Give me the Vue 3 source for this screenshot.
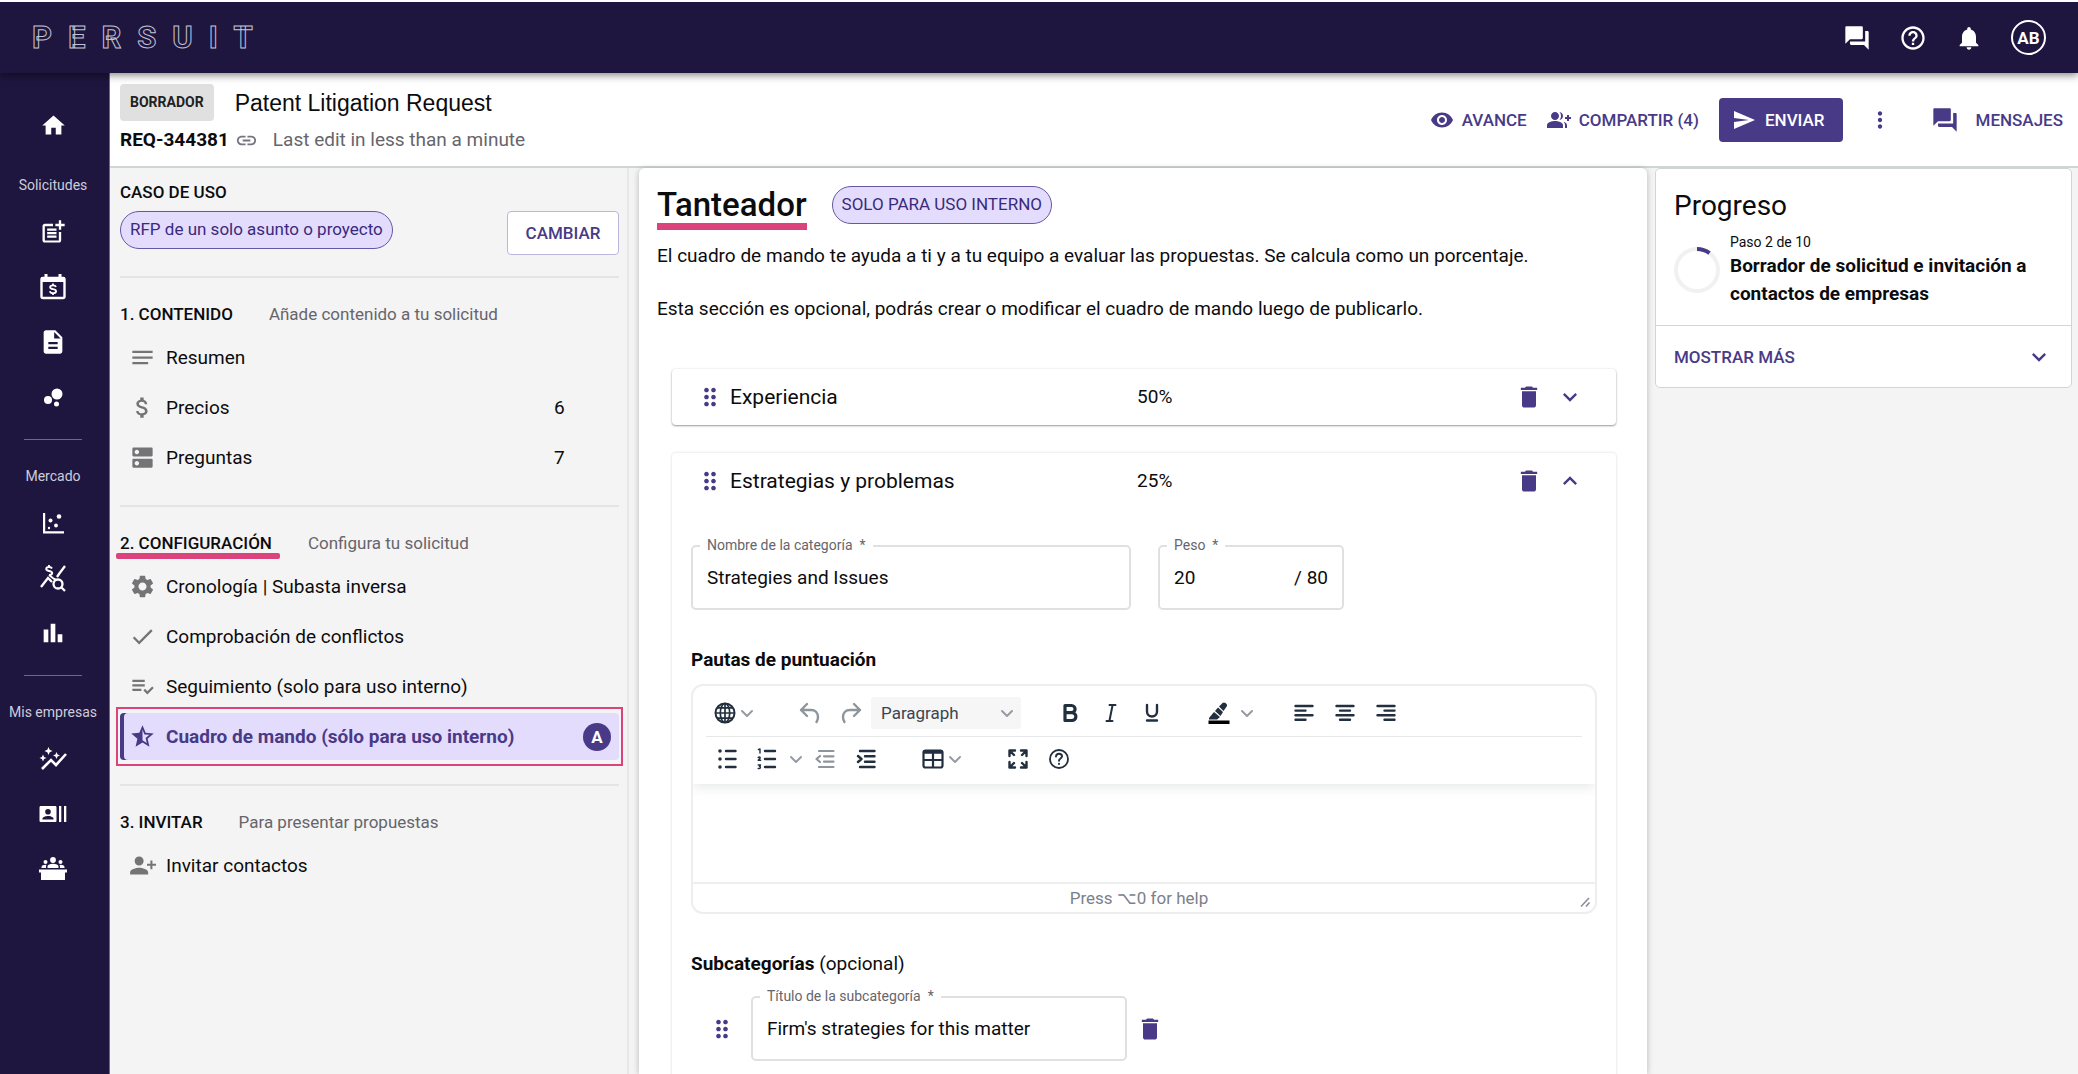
<script setup>
import { h, ref } from 'vue'

const paths = {
  home: 'M10 20v-6h4v6h5v-8h3L12 3 2 12h3v8z',
  forum: 'M21 6h-2v9H6v2c0 .55.45 1 1 1h11l4 4V7c0-.55-.45-1-1-1zm-4 6V3c0-.55-.45-1-1-1H3c-.55 0-1 .45-1 1v14l4-4h10c.55 0 1-.45 1-1z',
  help: 'M11 18h2v-2h-2v2zm1-16C6.48 2 2 6.48 2 12s4.48 10 10 10 10-4.48 10-10S17.52 2 12 2zm0 18c-4.41 0-8-3.59-8-8s3.59-8 8-8 8 3.59 8 8-3.59 8-8 8zm0-14c-2.21 0-4 1.79-4 4h2c0-1.1.9-2 2-2s2 .9 2 2c0 2-3 1.75-3 5h2c0-2.25 3-2.5 3-5 0-2.21-1.79-4-4-4z',
  bell: 'M12 22c1.1 0 2-.9 2-2h-4c0 1.1.89 2 2 2zm6-6v-5c0-3.07-1.64-5.64-4.5-6.32V4c0-.83-.67-1.5-1.5-1.5s-1.5.67-1.5 1.5v.68C7.63 5.36 6 7.92 6 11v5l-2 2v1h16v-1l-2-2z',
  noteAdd: 'M17 19.22H5V7h7V5H5c-1.1 0-2 .9-2 2v12c0 1.1.9 2 2 2h12c1.1 0 2-.9 2-2v-7h-2v7.22zM19 2h-2v3h-3v2h3v3h2V7h3V5h-3zM7 9h8v2H7zM7 12v2h8v-2H7zM7 15h8v2H7z',
  file: 'M14 2H6c-1.1 0-2 .9-2 2v16c0 1.1.89 2 2 2h12c1.1 0 2-.9 2-2V8l-6-6zm2 16H8v-2h8v2zm0-4H8v-2h8v2zm-3-5V3.5L18.500 9H13z',
  bars: 'M4 9h4v11H4zM16 13h4v7h-4zM10 4h4v16h-4z',
  link: 'M3.9 12c0-1.71 1.39-3.1 3.1-3.1h4V7H7c-2.76 0-5 2.24-5 5s2.24 5 5 5h4v-1.9H7c-1.71 0-3.1-1.39-3.1-3.1zM8 13h8v-2H8v2zm9-6h-4v1.900h4c1.71 0 3.1 1.39 3.1 3.1s-1.39 3.1-3.1 3.1h-4V17h4c2.76 0 5-2.24 5-5s-2.24-5-5-5z',
  eye: 'M12 4.5C7 4.5 2.73 7.61 1 12c1.73 4.39 6 7.5 11 7.500s9.270-3.110 11-7.500c-1.730-4.390-6-7.500-11-7.500zM12 17c-2.760 0-5-2.240-5-5s2.240-5 5-5 5 2.240 5 5-2.240 5-5 5zm0-8c-1.660 0-3 1.340-3 3s1.340 3 3 3 3-1.340 3-3-1.340-3-3-3z',
  groupAdd: 'M22 9V7h-2v2h-2v2h2v2h2v-2h2V9zM8 12c2.210 0 4-1.790 4-4s-1.790-4-4-4-4 1.790-4 4 1.790 4 4 4zM8 13c-2.670 0-8 1.340-8 4v3h16v-3c0-2.660-5.330-4-8-4zM12.510 4.050C13.430 5.110 14 6.490 14 8s-.57 2.890-1.490 3.950C14.470 11.700 16 10.040 16 8s-1.530-3.700-3.490-3.950zM16.530 13.830C17.420 14.660 18 15.700 18 17v3h2v-3c0-1.450-1.590-2.510-3.470-3.170z',
  send: 'M2.010 21L23 12 2.010 3 2 10l15 2-15 2z',
  more: 'M12 8c1.100 0 2-.9 2-2s-.9-2-2-2-2 .9-2 2 .9 2 2 2zm0 2c-1.100 0-2 .9-2 2s.9 2 2 2 2-.9 2-2-.9-2-2-2zm0 6c-1.100 0-2 .9-2 2s.9 2 2 2 2-.9 2-2-.9-2-2-2z',
  notes: 'M3 18h14v-2H3v2zM3 6v2h18V6H3zm0 7h18v-2H3v2z',
  dollar: 'M11.800 10.900c-2.270-.59-3-1.200-3-2.150 0-1.090 1.010-1.850 2.700-1.850 1.780 0 2.440.85 2.500 2.100h2.210c-.07-1.720-1.120-3.300-3.210-3.810V3h-3v2.160c-1.940.42-3.500 1.680-3.500 3.610 0 2.310 1.910 3.460 4.700 4.130 2.500.6 3 1.480 3 2.410 0 .69-.49 1.790-2.700 1.790-2.060 0-2.870-.92-2.980-2.100h-2.200c.12 2.190 1.760 3.420 3.680 3.830V21h3v-2.150c1.950-.37 3.500-1.500 3.500-3.550 0-2.840-2.430-3.810-4.700-4.400z',
  dns: 'M20 13H4c-.55 0-1 .45-1 1v6c0 .55.45 1 1 1h16c.55 0 1-.45 1-1v-6c0-.55-.45-1-1-1zM7 19c-1.100 0-2-.9-2-2s.9-2 2-2 2 .9 2 2-.9 2-2 2zM20 3H4c-.55 0-1 .45-1 1v6c0 .55.45 1 1 1h16c.55 0 1-.45 1-1V4c0-.55-.45-1-1-1zM7 9c-1.100 0-2-.9-2-2s.9-2 2-2 2 .9 2 2-.9 2-2 2z',
  gear: 'M19.140 12.940c.04-.3.060-.61.060-.94 0-.32-.02-.64-.07-.94l2.030-1.580c.18-.14.230-.41.120-.61l-1.920-3.320c-.12-.22-.37-.29-.59-.22l-2.390.960c-.5-.38-1.030-.7-1.620-.94l-.36-2.540c-.04-.24-.24-.41-.48-.41h-3.840c-.24 0-.43.17-.47.41l-.36 2.540c-.59.24-1.130.57-1.620.94l-2.390-.96c-.22-.08-.47 0-.59.22L2.740 8.870c-.12.21-.08.47.12.61l2.030 1.580c-.05.3-.09.630-.09.94s.02.64.070.94l-2.030 1.580c-.18.14-.23.41-.12.61l1.920 3.320c.12.22.37.29.59.22l2.390-.96c.5.38 1.030.7 1.620.94l.36 2.540c.05.24.24.41.48.41h3.840c.24 0 .44-.17.47-.41l.36-2.540c.59-.24 1.130-.56 1.620-.94l2.390.96c.22.080.47 0 .59-.22l1.920-3.320c.12-.22.070-.47-.12-.61l-2.010-1.580zM12 15.600c-1.980 0-3.600-1.620-3.600-3.600s1.620-3.600 3.600-3.600 3.600 1.620 3.600 3.600-1.620 3.600-3.600 3.600z',
  check: 'M9 16.170L4.830 12l-1.420 1.410L9 19 21 7l-1.410-1.410z',
  listCheck: 'M3 10h11v2H3zM3 6h11v2H3zM3 14h8v2H3zM20.590 11.930l-4.250 4.240-2.120-2.120-1.410 1.410L16.340 19 22 13.340z',
  starHalf: 'M22 9.240l-7.190-.62L12 2 9.190 8.630 2 9.240l5.460 4.730L5.820 21 12 17.270 18.180 21l-1.630-7.030L22 9.240zM12 15.400V6.100l1.710 4.040 4.380.38-3.320 2.880 1 4.280L12 15.400z',
  personAdd: 'M9 12c2.210 0 4-1.790 4-4s-1.790-4-4-4-4 1.790-4 4 1.790 4 4 4zM9 14c-2.670 0-8 1.340-8 4v2h16v-2c0-2.660-5.330-4-8-4zM19 7.500h1.800v3H24v1.800h-3.200v3H19v-3h-3v-1.800h3z',
  drag: 'M11 18c0 1.100-.9 2-2 2s-2-.9-2-2 .9-2 2-2 2 .9 2 2zm-2-8c-1.100 0-2 .9-2 2s.9 2 2 2 2-.9 2-2-.9-2-2-2zm0-6c-1.100 0-2 .9-2 2s.9 2 2 2 2-.9 2-2-.9-2-2-2zm6 4c1.100 0 2-.9 2-2s-.9-2-2-2-2 .9-2 2 .9 2 2 2zm0 2c-1.100 0-2 .9-2 2s.9 2 2 2 2-.9 2-2-.9-2-2-2zm0 6c-1.100 0-2 .9-2 2s.9 2 2 2 2-.9 2-2-.9-2-2-2z',
  trash: 'M6 19c0 1.100.9 2 2 2h8c1.100 0 2-.9 2-2V7H6v12zM19 4h-3.500l-1-1h-5l-1 1H5v2h14V4z',
  down: 'M7.410 8.590L12 13.170l4.590-4.580L18 10l-6 6-6-6z',
  up: 'M12 8l-6 6 1.410 1.410L12 10.830l4.590 4.580L18 14z',
}

const Icon = ({ name, size = 24 }) =>
  h('svg', { class: 'icon', viewBox: '0 0 24 24', width: size, height: size, fill: 'currentColor', 'aria-hidden': 'true' }, [
    h('path', { d: paths[name], 'fill-rule': 'evenodd' }),
  ])
Icon.props = ['name', 'size']

const sections = [
  {
    title: '1. CONTENIDO',
    hint: 'Añade contenido a tu solicitud',
    items: [
      { icon: 'notes', label: 'Resumen' },
      { icon: 'dollar', label: 'Precios', count: 6 },
      { icon: 'dns', label: 'Preguntas', count: 7 },
    ],
  },
  {
    title: '2. CONFIGURACIÓN',
    marked: true,
    hint: 'Configura tu solicitud',
    items: [
      { icon: 'gear', label: 'Cronología | Subasta inversa' },
      { icon: 'check', label: 'Comprobación de conflictos' },
      { icon: 'listCheck', label: 'Seguimiento (solo para uso interno)' },
      { icon: 'starHalf', label: 'Cuadro de mando (sólo para uso interno)', active: true, badge: 'A' },
    ],
  },
  {
    title: '3. INVITAR',
    hint: 'Para presentar propuestas',
    items: [{ icon: 'personAdd', label: 'Invitar contactos' }],
  },
]

const categoryName = ref('Strategies and Issues')
const weight = ref('20')
const subcategory = ref("Firm's strategies for this matter")
</script>

<template>
  <div class="app">
    <header class="topbar">
      <a class="logo" href="#">PERSUIT</a>
      <div class="top-actions">
        <button aria-label="Mensajes"><Icon name="forum" :size="28" /></button>
        <button aria-label="Ayuda"><Icon name="help" :size="28" /></button>
        <button aria-label="Notificaciones"><Icon name="bell" :size="28" /></button>
        <button class="avatar">AB</button>
      </div>
    </header>

    <div class="body">
      <nav class="rail">
        <a href="#" aria-label="Inicio"><Icon name="home" :size="27" /></a>
        <div class="rail-group">
          <p>Solicitudes</p>
          <a href="#" aria-label="Nueva solicitud"><Icon name="noteAdd" :size="28" /></a>
          <a href="#" aria-label="Tarifas">
            <svg viewBox="0 0 28 28" width="28" height="28" fill="none" stroke="currentColor" stroke-width="2.400">
              <rect x="2.500" y="5" width="23" height="20" rx="1.500" /><path d="M2 6.500h24" stroke-width="5" /><path d="M7 1v4M21 1v4" stroke-width="3" />
              <path d="M17 14c-.4-1.200-1.600-1.700-3-1.700-1.700 0-2.900.7-2.900 1.900 0 2.900 6 1 6 4 0 1.200-1.300 2-3.100 2-1.600 0-2.800-.6-3.200-1.900M14 10.500v2M14 20v2" stroke-width="1.800" />
            </svg>
          </a>
          <a href="#" aria-label="Documentos"><Icon name="file" :size="28" /></a>
          <a href="#" aria-label="Grupos">
            <svg viewBox="0 0 28 28" width="28" height="28" fill="currentColor"><circle cx="18" cy="11" r="5.500" /><circle cx="9" cy="17" r="4" /><circle cx="17.500" cy="21" r="2.500" /></svg>
          </a>
        </div>
        <div class="rail-group ruled">
          <p>Mercado</p>
          <a href="#" aria-label="Dispersión">
            <svg viewBox="0 0 28 28" width="28" height="28" fill="currentColor"><path d="M4 4h2.200v18.200H25v2.200H4z" /><circle cx="11.500" cy="11.500" r="2" /><circle cx="20" cy="7.500" r="2.300" /><circle cx="17" cy="16.500" r="1.900" /><circle cx="10" cy="19" r="1.200" /></svg>
          </a>
          <a href="#" aria-label="Análisis de precios">
            <svg viewBox="0 0 28 28" width="28" height="28" fill="none" stroke="currentColor" stroke-width="2.300">
              <path d="M2 23l7-9 4 4M18 13l2-3 6-8" /><circle cx="19" cy="20" r="4.500" /><path d="M22 23l4 4" />
              <path d="M13 4.500c-.5-1-1.500-1.500-3-1.500-1.700 0-2.800.7-2.800 2 0 2.700 6 1.200 6 4 0 1.300-1.300 2-3.200 2M10 1v2M10 11l5 4 3 1" stroke-width="1.900" />
            </svg>
          </a>
          <a href="#" aria-label="Informes"><Icon name="bars" :size="28" /></a>
        </div>
        <div class="rail-group ruled">
          <p>Mis empresas</p>
          <a href="#" aria-label="Tendencias">
            <svg viewBox="0 0 28 28" width="28" height="28" fill="currentColor">
              <path d="M3 24l9-9 5 5L27 9" fill="none" stroke="currentColor" stroke-width="2.600" />
              <path d="M9.500 2l1.200 2.800 2.800 1.200-2.800 1.200L9.500 10 8.300 7.200 5.500 6l2.800-1.200zM4 9.500l1.100 2.400 2.400 1.100-2.400 1.100L4 16.500l-1.100-2.400L.5 13l2.400-1.100zM17.500 7l1.100 2.400 2.400 1.100-2.400 1.100-1.100 2.400-1.100-2.400L14 10.500l2.400-1.100z" />
            </svg>
          </a>
          <a href="#" aria-label="Contactos">
            <svg viewBox="0 0 28 28" width="28" height="28" fill="currentColor">
              <path fill-rule="evenodd" d="M2 6h14c1 0 1.500.5 1.500 1.500v13c0 1-.5 1.500-1.500 1.500H2c-1 0-1.500-.5-1.500-1.500v-13C.5 6.500 1 6 2 6zm7 3a2.800 2.800 0 1 0 0 5.600A2.800 2.800 0 0 0 9 9zm-5.500 10.500h11v-.9c0-1.700-3.700-2.600-5.500-2.600s-5.500.9-5.500 2.600zM20 6h2.300v16H20zM25 6h2.300v16H25z" />
            </svg>
          </a>
          <a href="#" aria-label="Panel">
            <svg viewBox="0 0 28 28" width="28" height="28" fill="currentColor">
              <circle cx="14" cy="5" r="2.900" /><circle cx="6.500" cy="7" r="2" /><circle cx="21.500" cy="7" r="2" />
              <path d="M8.500 13v-1.500c0-1.700 2.500-2.700 5.500-2.700s5.500 1 5.500 2.700V13zM2.500 13v-1c0-1.300 2-2.200 4-2.200l1 .2c-.5.800-.5 1.500-.5 3zM25.500 13v-1c0-1.300-2-2.200-4-2.200l-1 .2c.5.800.5 1.500.5 3zM0 14.500h28v3h-2V25H2v-7.500H0z" />
            </svg>
          </a>
        </div>
      </nav>

      <div class="page">
        <div class="subheader">
          <div>
            <div class="title-row"><span class="status">BORRADOR</span><h1>Patent Litigation Request</h1></div>
            <div class="meta-row"><strong>REQ-344381</strong><a href="#" aria-label="Copiar enlace"><Icon name="link" :size="23" /></a><span>Last edit in less than a minute</span></div>
          </div>
          <div class="actions">
            <button class="flat"><Icon name="eye" :size="24" />AVANCE</button>
            <button class="flat"><Icon name="groupAdd" :size="24" />COMPARTIR (4)</button>
            <button class="primary"><Icon name="send" :size="24" />ENVIAR</button>
            <button class="flat more" aria-label="Más"><Icon name="more" :size="26" /></button>
            <button class="flat messages"><Icon name="forum" :size="28" />MENSAJES</button>
          </div>
        </div>

        <div class="columns">
          <aside class="outline">
            <h2 class="caption">CASO DE USO</h2>
            <div class="use-case">
              <span class="pill">RFP de un solo asunto o proyecto</span>
              <button class="outlined">CAMBIAR</button>
            </div>
            <section v-for="s in sections" :key="s.title">
              <div class="section-head"><h2 class="caption" :class="{ marked: s.marked }">{{ s.title }}</h2><span>{{ s.hint }}</span></div>
              <ul>
                <li v-for="i in s.items" :key="i.label">
                  <a href="#" :class="{ active: i.active }">
                    <span class="item-icon"><Icon :name="i.icon" :size="27" /></span>
                    <span class="item-label">{{ i.label }}</span>
                    <span v-if="i.count" class="count">{{ i.count }}</span>
                    <span v-if="i.badge" class="badge">{{ i.badge }}</span>
                  </a>
                </li>
              </ul>
            </section>
          </aside>

          <main class="content">
            <div class="heading"><h2>Tanteador</h2><span class="pill">SOLO PARA USO INTERNO</span></div>
            <p>El cuadro de mando te ayuda a ti y a tu equipo a evaluar las propuestas. Se calcula como un porcentaje.</p>
            <p>Esta sección es opcional, podrás crear o modificar el cuadro de mando luego de publicarlo.</p>

            <article class="category">
              <div class="category-head">
                <div class="name"><Icon name="drag" :size="28" /><h3>Experiencia</h3></div>
                <div class="share">50%</div>
                <button aria-label="Eliminar"><Icon name="trash" :size="28" /></button>
                <button aria-label="Expandir"><Icon name="down" :size="28" /></button>
              </div>
            </article>

            <article class="category open">
              <div class="category-head">
                <div class="name"><Icon name="drag" :size="28" /><h3>Estrategias y problemas</h3></div>
                <div class="share">25%</div>
                <button aria-label="Eliminar"><Icon name="trash" :size="28" /></button>
                <button aria-label="Contraer"><Icon name="up" :size="28" /></button>
              </div>
              <div class="category-body">
                <div class="fields">
                  <div class="field name-field"><label for="cat">Nombre de la categoría&nbsp; *</label><input id="cat" v-model="categoryName" type="text" /></div>
                  <div class="field weight-field"><label for="weight">Peso&nbsp; *</label><input id="weight" v-model="weight" type="text" /><span>/ 80</span></div>
                </div>

                <h4>Pautas de puntuación</h4>
                <div class="editor">
                  <div class="toolbar">
                    <div class="tools">
                      <button class="split" aria-label="Idioma">
                        <svg viewBox="0 0 28 28" width="28" height="28" fill="none" stroke="currentColor" stroke-width="1.700"><circle cx="14" cy="14" r="9.500" stroke-width="2" /><ellipse cx="14" cy="14" rx="4.700" ry="9.500" /><path d="M14 4v20M4 14h20M6 8.800h16M6 19.200h16" /></svg>
                        <svg class="chev" viewBox="0 0 16 16" width="16" height="16"><path d="M3 6l5 5 5-5" /></svg>
                      </button>
                      <div class="group muted">
                        <button aria-label="Deshacer"><svg viewBox="0 0 28 28" width="28" height="28" class="line"><path d="M11 5l-6 6 6 6M5 11h10c4.500 0 7 3 7 7 0 2-.5 3.500-1.500 5" /></svg></button>
                        <button aria-label="Rehacer"><svg viewBox="0 0 28 28" width="28" height="28" class="line"><path d="M17 5l6 6-6 6M23 11H13c-4.500 0-7 3-7 7 0 2 .5 3.500 1.500 5" /></svg></button>
                      </div>
                      <div class="format">
                        <select aria-label="Formato"><option>Paragraph</option></select>
                        <svg class="chev" viewBox="0 0 16 16" width="16" height="16"><path d="M3 6l5 5 5-5" /></svg>
                      </div>
                      <div class="group styles">
                        <button aria-label="Negrita"><svg viewBox="0 0 28 28" width="28" height="28" class="line heavy"><path d="M9 6.500h6.500a3.600 3.600 0 0 1 0 7.200H9zM9 13.700h7a3.900 3.900 0 0 1 0 7.800H9z" /></svg></button>
                        <button aria-label="Cursiva"><svg viewBox="0 0 28 28" width="28" height="28" class="line"><path d="M12.500 6h6M9.500 22h6M15.600 6l-3.200 16" stroke-width="2" /></svg></button>
                        <button aria-label="Subrayado"><svg viewBox="0 0 28 28" width="28" height="28" class="line"><path d="M9 6v6.500a5 5 0 0 0 10 0V6M9 21.500h10" /></svg></button>
                      </div>
                      <div class="split pen">
                        <button aria-label="Color de resaltado"><svg viewBox="0 0 28 28" width="28" height="28" fill="currentColor"><path d="M4 19l5-6 6 5-3 2.500H4zM10 12l3-3.500 5 4.500-2.500 4zM14 7.500L17.500 4c1-.8 2-.7 3 .1l.8.7c1 1 1 2 .2 3L18.500 12z" /><path d="M3.500 21.500h21V25h-21z" fill="#000" /></svg></button>
                        <button aria-label="Más colores"><svg class="chev" viewBox="0 0 16 16" width="16" height="16"><path d="M3 6l5 5 5-5" /></svg></button>
                      </div>
                      <div class="group">
                        <button aria-label="Izquierda"><svg viewBox="0 0 28 28" width="28" height="28" class="line"><path d="M5.500 7h17M5.500 11.600h10M5.500 16.200h17M5.500 20.800h10" /></svg></button>
                        <button aria-label="Centro"><svg viewBox="0 0 28 28" width="28" height="28" class="line"><path d="M5.500 7h17M9 11.600h10M5.500 16.200h17M9 20.800h10" /></svg></button>
                        <button aria-label="Derecha"><svg viewBox="0 0 28 28" width="28" height="28" class="line"><path d="M5.500 7h17M12.500 11.600h10M5.500 16.200h17M12.500 20.800h10" /></svg></button>
                      </div>
                    </div>
                    <div class="tools second">
                      <div class="group">
                        <button aria-label="Viñetas"><svg viewBox="0 0 28 28" width="28" height="28" class="line"><path d="M13 6h9.500M13 14h9.500M13 22h9.500" /><path d="M7 6h.01M7 14h.01M7 22h.01" stroke-width="3.600" /></svg></button>
                        <button aria-label="Numeración"><svg viewBox="0 0 28 28" width="28" height="28" class="line"><path d="M11 6h10M11 14h10M11 22h10" /><path d="M4.500 4.500L6 4v4M4.200 12.500c1-1 2.500-.3 1.800.8l-1.800 2h2.500M4.200 20h2.300l-1 1.500c1.500.2 1.300 2.300-1.300 2" stroke-width="1.400" /></svg></button>
                        <button class="narrow" aria-label="Tipos de lista"><svg class="chev" viewBox="0 0 16 16" width="16" height="16"><path d="M3 6l5 5 5-5" /></svg></button>
                        <button class="muted" aria-label="Reducir sangría"><svg viewBox="0 0 28 28" width="28" height="28" class="line"><path d="M8 6h14.500M13 11.300h9.500M13 16.700h9.500M8 22h14.500M9 11l-3.500 3L9 17" stroke-width="2.200" /></svg></button>
                        <button aria-label="Aumentar sangría"><svg viewBox="0 0 28 28" width="28" height="28" class="line"><path d="M8 6h14.500M13 11.300h9.500M13 16.700h9.500M8 22h14.500M6 11l3.500 3L6 17" /></svg></button>
                      </div>
                      <button class="split" aria-label="Tabla">
                        <svg viewBox="0 0 28 28" width="28" height="28" fill="none" stroke="currentColor" stroke-width="2.200"><rect x="4.500" y="5.500" width="19" height="17" rx="2" /><path d="M5 7h18" stroke-width="3.500" /><path d="M14 7v15M5 15h18" /></svg>
                        <svg class="chev" viewBox="0 0 16 16" width="16" height="16"><path d="M3 6l5 5 5-5" /></svg>
                      </button>
                      <div class="group">
                        <button aria-label="Pantalla completa"><svg viewBox="0 0 28 28" width="28" height="28" class="line"><path d="M11 5.500H5.500V11M5.500 5.500l4.500 4.500M17 5.500h5.500V11M22.500 5.500L18 10M11 22.500H5.500V17M5.500 22.500L10 18M17 22.500h5.500V17M22.500 22.500L18 18" /></svg></button>
                        <button aria-label="Ayuda del editor"><svg viewBox="0 0 28 28" width="28" height="28" class="line"><circle cx="14" cy="14" r="9" stroke-width="1.800" /><path d="M11 11.500c.2-1.800 1.400-2.700 3-2.700 1.800 0 3 1 3 2.500 0 2.300-3 2.200-3 4.400M14 18.800v.1" stroke-width="2" /></svg></button>
                      </div>
                    </div>
                  </div>
                  <textarea aria-label="Pautas de puntuación"></textarea>
                  <div class="statusbar">
                    <span>Press ⌥0 for help</span>
                    <svg viewBox="0 0 12 12" width="12" height="12" stroke="#8b9098" stroke-width="1.600"><path d="M2 10.500L10 2M7 10.500l3.500-4" /></svg>
                  </div>
                </div>

                <h4>Subcategorías <span>(opcional)</span></h4>
                <div class="subcategory">
                  <Icon name="drag" :size="28" />
                  <div class="field"><label for="sub">Título de la subcategoría&nbsp; *</label><input id="sub" v-model="subcategory" type="text" /></div>
                  <button aria-label="Eliminar subcategoría"><Icon name="trash" :size="28" /></button>
                </div>
              </div>
            </article>
          </main>

          <aside class="progress">
            <div class="progress-card">
              <h2>Progreso</h2>
              <div class="step">
                <svg viewBox="0 0 46 46" width="46" height="46" fill="none" stroke-width="4"><circle cx="23" cy="23" r="21" stroke="#f1f1f1" /><path d="M23 2a21 21 0 0 1 12.500 4.100" stroke="#483a87" /></svg>
                <div><span>Paso 2 de 10</span><strong>Borrador de solicitud e invitación a contactos de empresas</strong></div>
              </div>
              <button>MOSTRAR MÁS<Icon name="down" :size="28" /></button>
            </div>
          </aside>
        </div>
      </div>
    </div>
  </div>
</template>

<style>
body {
  margin: 0;
}
</style>

<style scoped>
* {
  box-sizing: border-box;
}
.app {
  --brand: #483a87;
  --navy: #1e163f;
  --pink: #db437d;
  --lilac: #e4dcfd;
  display: flex;
  flex-direction: column;
  height: 100vh;
  border-top: 2px solid #fff;
  font-family: Roboto, "Liberation Sans", sans-serif;
  font-size: 19px;
  line-height: 24px;
  color: #0c0c0e;
  background: #f4f4f4;
  overflow: hidden;
}
h1, h2, h3, h4, p, ul {
  margin: 0;
  padding: 0;
  font-weight: 400;
}
ul {
  list-style: none;
}
a {
  color: inherit;
  text-decoration: none;
}
button {
  display: flex;
  align-items: center;
  justify-content: center;
  padding: 0;
  border: 0;
  background: none;
  font: inherit;
  color: inherit;
}
svg {
  display: block;
  flex: none;
}
.topbar {
  display: flex;
  flex: none;
  align-items: center;
  justify-content: space-between;
  height: 71px;
  padding: 0 32px;
  background: var(--navy);
  color: #fff;
  box-shadow: 0 2px 8px rgba(0, 0, 0, .5);
  z-index: 2;
}
.logo {
  font-size: 31px;
  font-weight: 700;
  letter-spacing: 16px;
  color: transparent;
  -webkit-text-stroke: 1px #c4c1d2;
}
.top-actions {
  display: flex;
  align-items: center;
  gap: 28px;
}
.avatar {
  width: 35px;
  height: 35px;
  border: 2px solid #fff;
  border-radius: 50%;
  font-size: 17px;
  font-weight: 700;
}
.body {
  display: flex;
  flex: 1;
  min-height: 0;
}
.rail {
  flex: none;
  width: 110px;
  padding: 25px 3px 0 0;
  border-right: 1px solid #6d6888;
  background: var(--navy);
  color: #fff;
}
.rail a {
  display: flex;
  align-items: center;
  justify-content: center;
  height: 55px;
}
.rail p {
  margin-bottom: 9px;
  font-size: 14px;
  line-height: 20px;
  text-align: center;
  color: #cfccd9;
}
.rail-group {
  padding-top: 22px;
}
.rail-group.ruled {
  padding-top: 15px;
}
.rail-group.ruled::before {
  content: "";
  display: block;
  width: 58px;
  margin: 0 auto 26px;
  border-top: 1px solid #6d6888;
}
.page {
  display: flex;
  flex: 1;
  flex-direction: column;
  min-width: 0;
}
.subheader {
  display: flex;
  flex: none;
  justify-content: space-between;
  height: 95px;
  padding: 11px 15px 0 10px;
  border-bottom: 2px solid #cfd6d5;
  background: #fff;
}
.title-row {
  display: flex;
  align-items: center;
  gap: 21px;
}
.status {
  padding: 0 10px;
  border-radius: 4px;
  background: #e0e0e0;
  font-size: 14px;
  font-weight: 700;
  line-height: 37px;
  color: #222;
}
h1 {
  font-family: "Liberation Sans", Arial, sans-serif;
  font-size: 23px;
}
.meta-row {
  display: flex;
  align-items: center;
  margin-top: 7px;
}
.meta-row a {
  margin: 0 15px 0 6px;
  color: #77747f;
}
.meta-row span {
  color: #66656b;
}
.actions {
  display: flex;
  align-items: center;
  height: 72px;
  color: var(--brand);
  font-size: 17px;
  font-weight: 500;
}
.flat {
  gap: 8px;
  margin-right: 20px;
}
.primary {
  gap: 9px;
  height: 44px;
  padding: 0 18px 0 13px;
  border-radius: 4px;
  background: var(--brand);
  color: #fff;
}
.more {
  margin: 0 38px 0 24px;
}
.messages {
  gap: 17px;
  margin-right: 0;
}
.columns {
  display: flex;
  flex: 1;
  min-height: 0;
}
.outline {
  flex: none;
  width: 519px;
  padding: 12px 8px 0 10px;
  border-right: 2px solid #e7e7e7;
}
.caption {
  font-size: 17px;
  font-weight: 500;
}
.pill {
  height: 38px;
  padding: 0 9px;
  border: 1px solid #6558a0;
  border-radius: 19px;
  background: var(--lilac);
  font-size: 17px;
  line-height: 35px;
  color: #3a2a7c;
}
.use-case {
  display: flex;
  align-items: flex-start;
  justify-content: space-between;
  margin: 7px 0 21px;
}
.outlined {
  width: 112px;
  height: 44px;
  border: 1px solid #bdb6dc;
  border-radius: 4px;
  background: #fff;
  color: var(--brand);
  font-size: 17px;
  font-weight: 500;
}
.outline section {
  padding: 24px 0;
  border-top: 2px solid #e4e4e4;
}
.section-head {
  display: flex;
  gap: 36px;
  font-size: 17px;
  color: #66656b;
}
.section-head .caption {
  position: relative;
  color: #0c0c0e;
}
.marked::after {
  content: "";
  position: absolute;
  left: -4px;
  right: -8px;
  bottom: -4px;
  height: 6px;
  border-radius: 2px;
  background: var(--pink);
}
.outline ul {
  display: flex;
  flex-direction: column;
  gap: 3px;
  margin-top: 8px;
}
.outline li a {
  display: flex;
  align-items: center;
  height: 47px;
  padding: 0 8px;
  border-radius: 4px;
}
.item-icon {
  display: flex;
  justify-content: center;
  width: 28px;
  color: #747476;
}
.item-label {
  flex: 1;
  margin-left: 10px;
}
.count {
  width: 57px;
}
.active {
  position: relative;
  background: var(--lilac);
  box-shadow: inset 4px 0 var(--brand);
  color: var(--brand);
  font-weight: 700;
}
.active::after {
  content: "";
  position: absolute;
  inset: -6px -4px;
  border: 2px solid var(--pink);
}
.active .item-icon {
  color: inherit;
}
.badge {
  width: 28px;
  border-radius: 50%;
  background: var(--brand);
  color: #fff;
  font-size: 17px;
  line-height: 28px;
  text-align: center;
}
.content {
  flex: 1;
  min-width: 0;
  margin-left: 10px;
  padding: 18px 31px 0 18px;
  border-radius: 6px 6px 0 0;
  background: #fff;
  box-shadow: 0 1px 6px rgba(0, 0, 0, .25);
  overflow: hidden;
}
.heading {
  display: flex;
  align-items: flex-start;
  gap: 25px;
  margin-bottom: 14px;
}
.heading h2 {
  border-bottom: 7px solid var(--pink);
  font-size: 33px;
  font-weight: 500;
  line-height: 37px;
}
.content p {
  margin-bottom: 29px;
}
.category {
  margin: 48px 0 0 15px;
  border-radius: 4px;
  box-shadow: 0 1px 2px rgba(0, 0, 0, .38), 0 0 3px rgba(0, 0, 0, .08);
}
.category.open {
  margin-top: 28px;
  padding-bottom: 28px;
  box-shadow: 0 0 3px rgba(0, 0, 0, .16);
}
.category-head {
  display: grid;
  grid-template-columns: 51% 1fr 41px 28px;
  align-items: center;
  height: 56px;
  padding-right: 32px;
  color: var(--brand);
}
.category-head button {
  justify-content: flex-start;
}
.name {
  display: flex;
  align-items: center;
  gap: 6px;
  padding-left: 24px;
}
h3 {
  font-size: 21px;
  color: #0c0c0e;
}
.share {
  color: #0c0c0e;
}
.category-body {
  padding: 36px 19px 0;
}
.fields {
  display: flex;
  gap: 27px;
}
.field {
  position: relative;
  display: flex;
  align-items: center;
  height: 65px;
  padding: 0 14px;
  border: 2px solid #e0e0e0;
  border-radius: 5px;
}
.field label {
  position: absolute;
  left: 7px;
  top: -12px;
  padding: 0 7px;
  background: #fff;
  font-size: 14px;
  line-height: 20px;
  color: #66656b;
}
.field input {
  width: 100%;
  min-width: 0;
  padding: 0;
  border: 0;
  outline: 0;
  background: none;
  font: inherit;
  color: inherit;
}
.field span {
  flex: none;
}
.name-field {
  width: 440px;
}
.weight-field {
  width: 186px;
}
h4 {
  margin: 38px 0 12px;
  font-weight: 700;
}
h4 span {
  font-weight: 400;
}
.editor {
  border: 2px solid #eee;
  border-radius: 12px;
  color: #222f3e;
  overflow: hidden;
}
.toolbar {
  position: relative;
  padding-bottom: 3px;
  box-shadow: 0 2px 12px rgba(34, 47, 62, .13);
}
.tools {
  display: flex;
  align-items: center;
  gap: 28px;
  height: 50px;
  margin: 0 13px;
  padding-top: 4px;
}
.tools.second {
  height: 45px;
  padding-top: 0;
  border-top: 1px solid #e6e8ea;
}
.group {
  display: flex;
}
.group button {
  width: 41px;
}
.group .narrow {
  width: 16px;
}
.muted {
  color: #8f959d;
}
.split {
  display: flex;
  padding: 0 6px 0 5px;
}
.pen {
  gap: 6px;
  padding-right: 0;
}
.line,
.chev {
  fill: none;
  stroke: currentColor;
  stroke-width: 2.4;
  stroke-linecap: round;
  stroke-linejoin: round;
}
.heavy {
  stroke-width: 3.2;
}
.chev {
  stroke: #969ba3;
  stroke-width: 2;
}
.format {
  position: relative;
  width: 150px;
  margin-left: -28px;
}
.format select {
  width: 100%;
  height: 32px;
  padding: 0 10px;
  border: 0;
  border-radius: 3px;
  appearance: none;
  background: #f6f6f6;
  font: inherit;
  font-size: 17px;
  color: #3a4553;
}
.format .chev {
  position: absolute;
  right: 6px;
  top: 8px;
  pointer-events: none;
}
.editor textarea {
  display: block;
  width: 100%;
  height: 98px;
  border: 0;
  outline: 0;
  resize: none;
  background: none;
}
.statusbar {
  display: flex;
  align-items: flex-end;
  height: 30px;
  padding: 0 4px 2px 6px;
  border-top: 2px solid #eee;
  font-size: 17px;
  color: #7b818a;
}
.statusbar svg {
  margin-bottom: 2px;
}
.statusbar span {
  flex: 1;
  text-align: center;
}
.subcategory {
  display: flex;
  align-items: center;
  margin-top: 20px;
  padding-left: 17px;
  color: var(--brand);
}
.subcategory .field {
  width: 376px;
  margin: 0 9px 0 15px;
  color: #0c0c0e;
}
.progress {
  flex: none;
  width: 431px;
  padding: 0 6px 0 8px;
}
.progress-card {
  border: 1px solid #cfd6d5;
  border-radius: 5px;
  background: #fff;
}
.progress-card h2 {
  padding: 18px 18px 0;
  font-size: 28px;
  line-height: 37px;
}
.step {
  display: flex;
  align-items: center;
  gap: 10px;
  padding: 8px 18px 17px;
}
.step span {
  display: block;
  font-size: 14px;
  line-height: 20px;
}
.step strong {
  display: block;
  line-height: 28px;
}
.progress-card button {
  justify-content: space-between;
  width: 100%;
  height: 62px;
  padding: 0 18px;
  border-top: 1px solid #cfd6d5;
  color: var(--brand);
  font-size: 17px;
  font-weight: 500;
}
</style>
